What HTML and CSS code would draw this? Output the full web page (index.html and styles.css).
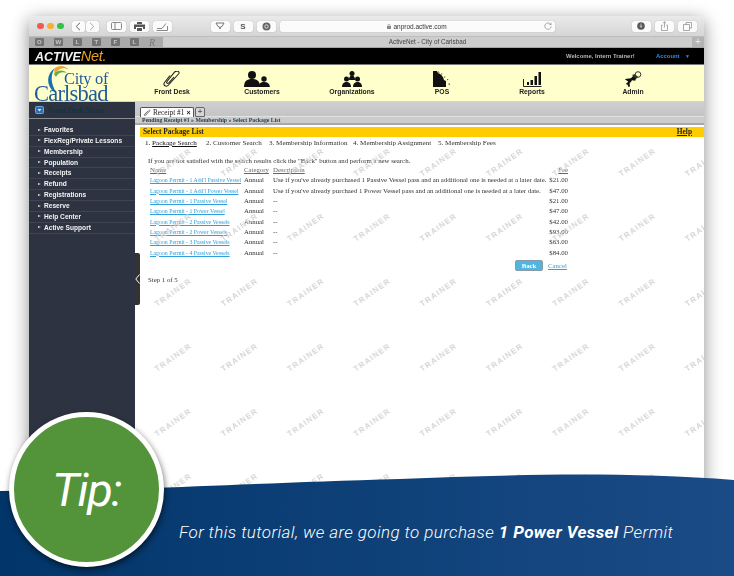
FILE: index.html
```html
<!DOCTYPE html>
<html lang="en">
<head>
    <meta charset="UTF-8">
    <title>ActiveNet - City of Carlsbad</title>
    <link rel="stylesheet" href="styles.css">
</head>
<body>
    <div class="window">
        <!-- browser toolbar -->
        <div class="toolbar">
            <div class="lights"><i class="red"></i><i class="amber"></i><i class="green"></i></div>
            <div class="tb-group nav-pair">
                <span class="tb-btn half"><svg width="6" height="9" viewBox="0 0 6 9"><path d="M5 .8 1.2 4.5 5 8.2" fill="none" stroke="#666" stroke-width="1"/></svg></span>
                <span class="tb-btn half"><svg width="6" height="9" viewBox="0 0 6 9"><path d="M1 .8 4.8 4.5 1 8.2" fill="none" stroke="#aaa" stroke-width="1"/></svg></span>
            </div>
            <span class="tb-btn sidebar-btn"><svg width="11" height="8" viewBox="0 0 11 8"><rect x=".5" y=".5" width="10" height="7" rx="1" fill="none" stroke="#888"/><path d="M4 .5v7" stroke="#888"/></svg></span>
            <span class="tb-btn"><svg width="11" height="9" viewBox="0 0 11 9"><path d="M3 0h5v2H3zM0 2.500h11V7H9V5H2v2H0zM3 6h5v3H3z" fill="#555"/></svg></span>
            <span class="tb-btn"><svg width="12" height="9" viewBox="0 0 12 9"><path d="M.5 8.500h11V4M1 6.500h5l4-5" fill="none" stroke="#888"/></svg></span>
            <span class="tb-btn ext-first"><svg width="10" height="8" viewBox="0 0 10 8"><path d="M1 1h8L7 4.500H6L5 7 4 4.500H3z" fill="none" stroke="#777"/></svg></span>
            <span class="tb-btn ext-text">S</span>
            <span class="tb-btn"><svg width="9" height="9" viewBox="0 0 9 9"><circle cx="4.500" cy="4.500" r="4" fill="#666"/><circle cx="4.500" cy="4.500" r="1.700" fill="none" stroke="#ddd"/></svg></span>
            <div class="urlbar">
                <span class="url"><svg width="4" height="5" viewBox="0 0 4 5"><rect y="2" width="4" height="3" fill="#888"/><path d="M1 2V1a1 1 0 0 1 2 0v1" fill="none" stroke="#888" stroke-width=".6"/></svg>anprod.active.com</span>
                <svg class="reload" width="8" height="8" viewBox="0 0 8 8"><path d="M6.800 2.500A3.200 3.200 0 1 0 7.200 4.500M5.300 2.600h1.800V.8" fill="none" stroke="#888" stroke-width=".7"/></svg>
            </div>
            <span class="tb-btn right-first"><svg width="8" height="8" viewBox="0 0 8 8"><circle cx="4" cy="4" r="3.800" fill="#555"/><path d="M4 1.500v3.200M2.800 3.800 4 5.500l1.200-1.700" stroke="#ddd" fill="none" stroke-width=".8"/></svg></span>
            <span class="tb-btn"><svg width="7" height="10" viewBox="0 0 7 10"><path d="M1.500 4H.5v5.500h6V4h-1M3.500 6.500V.8M2 2.200 3.500.8 5 2.200" fill="none" stroke="#888" stroke-width=".7"/></svg></span>
            <span class="tb-btn"><svg width="9" height="9" viewBox="0 0 9 9"><path d="M3 2.500V.5h5.500V6h-2M.5 2.500h6V8.500h-6z" fill="none" stroke="#888" stroke-width=".7"/></svg></span>
        </div>

        <!-- browser tab strip -->
        <div class="tabstrip">
            <div class="favs">
                <span class="fav">O</span><span class="fav">W</span><span class="fav">L</span><span class="fav">T</span><span class="fav">F</span><span class="fav">L</span><span class="fav-r">R</span>
            </div>
            <div class="page-title">ActiveNet - City of Carlsbad</div>
            <div class="new-tab">+</div>
        </div>

        <!-- app header -->
        <div class="topbar">
            <div class="brand"><span class="brand-active">ACTIVE</span><span class="brand-net">Net.</span></div>
            <div class="welcome">Welcome, Intern Trainer!</div>
            <div class="account">Account</div>
            <div class="account-arrow">▼</div>
        </div>
        <div class="navbar">
            <div class="city-logo">
                <svg class="swoosh" width="26" height="28" viewBox="0 0 26 28">
                    <path d="M9 27C1 20 1 9 10 3 5 10 6 19 11 27z" fill="#1a6fae"/>
                    <path d="M10 3C14 0 20 0 24 5 19 2 14 3 10 9 9 7 9 5 10 3z" fill="#e9a92a"/>
                    <path d="M9 9C12 5 18 4 22 8 17 6 13 8 11 12z" fill="#6aa84f"/>
                </svg>
                <div class="city-of">City of</div>
                <div class="carlsbad">Carlsbad</div>
            </div>
            <div class="nav-item">
                <svg width="24" height="16" viewBox="0 0 24 16"><path d="M10 4.500 4.500 11.500C2.500 14.500 6.500 16.500 8.500 14L18.500 3C20.500 .5 16.500-1 14.500 1.200L7 10.500C6 12 7.500 13 8.800 11.800L14 6" fill="none" stroke="#222" stroke-width="1.100"/></svg>
                <span>Front Desk</span>
            </div>
            <div class="nav-item">
                <svg class="shift-left" width="28" height="16" viewBox="0 0 28 16"><circle cx="9" cy="4" r="4" fill="#111"/><path d="M1 16c0-6 3-8 8-8s8 2 8 8z" fill="#111"/><circle cx="21" cy="8" r="2.700" fill="#111"/><path d="M15.500 16c.3-3.500 2-5 5.500-5s5.500 1.500 6 5z" fill="#111"/></svg>
                <span>Customers</span>
            </div>
            <div class="nav-item">
                <svg width="20" height="16" viewBox="0 0 20 16"><circle cx="10" cy="2.500" r="2.500" fill="#111"/><path d="M7 9c0-3 1-4.500 3-4.500S13 6 13 9z" fill="#111"/><circle cx="4.500" cy="8" r="2.500" fill="#111"/><path d="M0 16c0-3.500 2-5 4.500-5S9 12.500 9 16z" fill="#111"/><circle cx="15.500" cy="8" r="2.500" fill="#111"/><path d="M11 16c0-3.500 2-5 4.500-5s4.500 1.500 4.500 5z" fill="#111"/></svg>
                <span>Organizations</span>
            </div>
            <div class="nav-item">
                <svg width="18" height="16" viewBox="0 0 18 16"><path d="M0 0h4l1 2c3 1 5 3 6 7l2 1v6H0z" fill="#111"/><path d="M5.500 0l1 1.500-1 .5zM8.500 2l1 1-1 1zM11.500 5l1 1-1 1zM14 8l1.500.5-1 1zM15.500 12l1.500 1-1 1.500z" fill="#222"/></svg>
                <span>POS</span>
            </div>
            <div class="nav-item">
                <svg width="19" height="16" viewBox="0 0 19 16"><path d="M.5 8v7.500h18" fill="none" stroke="#222"/><path d="M4 11h2v3H4zM7.500 9h2.500v5H7.500zM11.500 5H14v9h-2.500zM15.500 1H18v13h-2.500z" fill="#111"/></svg>
                <span>Reports</span>
            </div>
            <div class="nav-item nav-last">
                <svg width="17" height="16" viewBox="0 0 17 16"><path d="M0 7h6l4-3 2 2-2 4-3-1-3 3v3H2V13L0 12l3-2z" fill="#111" transform="rotate(-8 8 8)"/><path d="M7 4l3-1 3 3-2 2z" fill="#333"/><circle cx="13" cy="3.500" r="2.800" fill="none" stroke="#333"/></svg>
                <span>Admin</span>
            </div>
        </div>

        <div class="main">
            <div class="sidebar">
                <div class="side-head">
                    <svg width="9" height="8" viewBox="0 0 9 8"><rect x=".5" y=".5" width="8" height="7" rx="1" fill="#2f6ea8" stroke="#6aa9dd"/><path d="M2.500 3h4L4.500 5.500z" fill="#cfe6f8"/></svg>
                    <span>Front Desk Menu</span>
                </div>
                <ul class="side-menu">
                    <li>Favorites</li>
                    <li>FlexReg/Private Lessons</li>
                    <li>Membership</li>
                    <li>Population</li>
                    <li>Receipts</li>
                    <li>Refund</li>
                    <li>Registrations</li>
                    <li>Reserve</li>
                    <li>Help Center</li>
                    <li>Active Support</li>
                </ul>
            </div>
            <div class="handle"><svg width="5" height="10" viewBox="0 0 5 10"><path d="M4.500.5.800 5l3.700 4.500" fill="none" stroke="#fff" stroke-width="1"/></svg></div>

            <div class="content">
                <div class="tabs-row">
                    <div class="receipt-tab">
                        <svg width="8" height="7" viewBox="0 0 7 7"><path d="M1 6 5.500 1.300c.6-.6 1.300.2.800.7L2 6.500C1 7 .3 6 1 5.300L4.500 2" fill="none" stroke="#444" stroke-width=".6"/></svg>
                        <span>Receipt #1</span><b>×</b>
                    </div>
                    <div class="add-tab">+</div>
                </div>
                <div class="crumbs">Pending Receipt #1 » Membership » Select Package List</div>
                <div class="title-bar"><span>Select Package List</span><a class="help">Help</a></div>
                <div class="steps">
                    <span class="step current">1. <u>Package Search</u></span>
                    <span class="step s2">2. Customer Search</span>
                    <span class="step s3">3. Membership Information</span>
                    <span class="step s4">4. Membership Assignment</span>
                    <span class="step s5">5. Membership Fees</span>
                </div>
                <p class="info">If you are not satisfied with the search results click the "Back" button and perform a new search.</p>
                <div class="pkg-table">
                    <div class="th">Name</div><div class="th">Category</div><div class="th">Description</div><div class="th fee">Fee</div>
                    <a class="pkg">Lagoon Permit - 1 Add'l Passive Vessel</a><div>Annual</div><div>Use if you've already purchased 1 Passive Vessel pass and an additional one is needed at a later date.</div><div class="fee">$21.00</div>
                    <a class="pkg">Lagoon Permit - 1 Add'l Power Vessel</a><div>Annual</div><div>Use if you've already purchaed 1 Power Vessel pass and an additional one is needed at a later date.</div><div class="fee">$47.00</div>
                    <a class="pkg">Lagoon Permit - 1 Passive Vessel</a><div>Annual</div><div>--</div><div class="fee">$21.00</div>
                    <a class="pkg">Lagoon Permit - 1 Power Vessel</a><div>Annual</div><div>--</div><div class="fee">$47.00</div>
                    <a class="pkg">Lagoon Permit - 2 Passive Vessels</a><div>Annual</div><div>--</div><div class="fee">$42.00</div>
                    <a class="pkg">Lagoon Permit - 2 Power Vessels</a><div>Annual</div><div>--</div><div class="fee">$93.00</div>
                    <a class="pkg">Lagoon Permit - 3 Passive Vessels</a><div>Annual</div><div>--</div><div class="fee">$63.00</div>
                    <a class="pkg">Lagoon Permit - 4 Passive Vessels</a><div>Annual</div><div>--</div><div class="fee">$84.00</div>
                </div>
                <div class="actions">
                    <button class="back-btn">Back</button>
                    <a class="cancel">Cancel</a>
                </div>
                <div class="step-count">Step 1 of 5</div>

                <!-- TRAINER stamp over the page -->
                <svg class="watermark" width="100%" height="100%">
                    <defs>
                        <pattern id="stamp" width="66.3" height="65" patternUnits="userSpaceOnUse">
                            <text x="38" y="28" text-anchor="middle" transform="rotate(-35 38 25)" class="stamp-text">TRAINER</text>
                        </pattern>
                    </defs>
                    <rect width="100%" height="100%" fill="url(#stamp)"/>
                </svg>
            </div>
        </div>
    </div>

    <!-- tip banner -->
    <div class="tip-banner">
        <svg class="wave" width="734" height="104" viewBox="0 0 734 104">
            <defs>
                <linearGradient id="waveFill" x1="0" x2="1" y1="0" y2="0">
                    <stop offset="0" stop-color="#02366a"/>
                    <stop offset="1" stop-color="#1b4b86"/>
                </linearGradient>
            </defs>
            <path d="M0 19C160 18 250 11 400 7 500 3 620-1 734 8V104H0z" fill="url(#waveFill)"/>
        </svg>
        <p class="tip-text">For this tutorial, we are going to purchase <b>1 Power Vessel</b> Permit</p>
    </div>
    <div class="tip-circle">Tip:</div>
</body>
</html>
```

FILE: styles.css
```css
* {
    margin: 0;
    padding: 0;
    box-sizing: border-box;
}

body {
    position: relative;
    width: 734px;
    height: 576px;
    overflow: hidden;
    background: #fff;
    font-family: "Liberation Serif", serif;
    padding: 16px 30px 0 29px;
}

/* browser window */
.window {
    width: 675px;
    height: 560px;
    display: flex;
    flex-direction: column;
    border-radius: 5px 5px 0 0;
    overflow: hidden;
    box-shadow: 0 4px 18px rgba(0, 0, 0, 0.45);
    filter: blur(0.25px);
}

.toolbar {
    height: 21px;
    flex: none;
    display: flex;
    align-items: center;
    padding-left: 8px;
    gap: 4px;
    background: linear-gradient(#ebeaeb, #d6d5d6);
    border-bottom: 1px solid #bdbdbd;
}

.lights {
    display: flex;
    gap: 3.500px;
    margin-right: 4px;
}

.lights i {
    width: 6.500px;
    height: 6.500px;
    border-radius: 50%;
}

.red { background: #f05a52; }
.amber { background: #f5b12e; }
.green { background: #35c148; }

.tb-btn {
    width: 19px;
    height: 11px;
    display: flex;
    align-items: center;
    justify-content: center;
    background: #fbfbfb;
    border-radius: 2px;
    box-shadow: 0 0 1px rgba(0, 0, 0, 0.35);
}

.tb-btn.half { width: 13px; }

.nav-pair {
    display: flex;
    gap: 1px;
    margin-right: 2px;
}

.sidebar-btn { margin-left: 2px; }
.ext-first { margin-left: 35px; }
.ext-text { font: bold 8px "Liberation Sans", sans-serif; color: #555; }

.urlbar {
    width: 275px;
    height: 11px;
    display: flex;
    align-items: center;
    justify-content: center;
    position: relative;
    background: #fbfbfb;
    border-radius: 2px;
    box-shadow: 0 0 1px rgba(0, 0, 0, 0.3);
}

.url {
    font: 6.500px "Liberation Sans", sans-serif;
    color: #333;
    display: flex;
    align-items: center;
    gap: 2px;
}

.reload {
    position: absolute;
    right: 3px;
    top: 1.500px;
}

.right-first { margin-left: 73px; }

.tabstrip {
    height: 11px;
    flex: none;
    display: flex;
    background: #cdcdcd;
    border-bottom: 1px solid #a5a5a5;
}

.favs {
    width: 134px;
    display: flex;
    align-items: center;
    padding-left: 6px;
    gap: 10.500px;
    background: #aaa;
}

.fav {
    width: 8.500px;
    height: 8px;
    background: #737373;
    border-radius: 1px;
    color: #c8c8c8;
    font: bold 6px/8px "Liberation Sans", sans-serif;
    text-align: center;
}

.fav-r {
    color: #777;
    font: italic 10px/9px "Liberation Serif", serif;
}

.page-title {
    flex: 1;
    text-align: center;
    font: 6.300px/10px "Liberation Sans", sans-serif;
    color: #444;
}

.new-tab {
    width: 12px;
    background: #b3b3b3;
    color: #e8e8e8;
    font: 10px/10px "Liberation Sans", sans-serif;
    text-align: center;
}

/* app header */
.topbar {
    height: 17px;
    flex: none;
    display: flex;
    align-items: center;
    background: #000;
    border-bottom: 1px solid #777;
    font-family: "Liberation Sans", sans-serif;
    color: #b8b8b8;
}

.brand {
    width: 537px;
    padding-left: 6px;
    font-style: italic;
    line-height: 16px;
    white-space: nowrap;
}

.brand-active {
    color: #f3f3f3;
    font-weight: bold;
    font-size: 12.500px;
}

.brand-net {
    color: #e9a020;
    font-size: 14.500px;
    letter-spacing: -0.300px;
}

.welcome {
    width: 90px;
    font-size: 5.900px;
    font-weight: bold;
}

.account {
    width: 29px;
    font-size: 5.900px;
    font-weight: bold;
    color: #2b8cf0;
}

.account-arrow {
    font-size: 5px;
    color: #2b8cf0;
}

.navbar {
    height: 37px;
    flex: none;
    display: flex;
    background: #ffffcc;
    border-bottom: 1px solid #d6d6c0;
    font-family: "Liberation Sans", sans-serif;
}

.city-logo {
    width: 98px;
    position: relative;
    color: #1f5c99;
    font-family: "Liberation Serif", serif;
}

.swoosh {
    position: absolute;
    left: 16px;
    top: 0;
}

.city-of {
    position: absolute;
    left: 35px;
    top: 7px;
    font-size: 16.500px;
    letter-spacing: -0.300px;
    line-height: 14px;
    white-space: nowrap;
}

.carlsbad {
    position: absolute;
    left: 5px;
    top: 21px;
    font-size: 22.500px;
    letter-spacing: -0.800px;
    line-height: 16px;
}

.nav-item {
    width: 90px;
    display: flex;
    flex-direction: column;
    align-items: center;
    padding-top: 6px;
    font-size: 6.800px;
    font-weight: bold;
    color: #222;
    line-height: 8px;
}

.nav-item span { margin-top: 1px; }
.nav-item .shift-left { margin-right: 10px; }
.nav-last { margin-left: 11px; }

/* page body */
.main {
    flex: 1;
    position: relative;
    display: flex;
    min-height: 0;
}

.sidebar {
    width: 106px;
    flex: none;
    background: #2d3340;
}

.side-head {
    height: 17px;
    display: flex;
    align-items: center;
    gap: 4px;
    padding-left: 6px;
    font-size: 7.500px;
    font-weight: bold;
    color: #14363f;
    border-bottom: 1px solid #8a8d93;
}

.side-menu {
    list-style: none;
    margin-top: 5px;
    padding-top: 1px;
    font-family: "Liberation Sans", sans-serif;
}

.side-menu li {
    height: 10.870px;
    line-height: 10px;
    padding-left: 15px;
    position: relative;
    color: #f2f2f2;
    font-size: 6.600px;
    font-weight: bold;
    border-bottom: 1px solid #3e4452;
}

.side-menu li::before {
    content: "";
    position: absolute;
    left: 9px;
    top: 3.500px;
    border-left: 3px solid #ddd;
    border-top: 1.800px solid transparent;
    border-bottom: 1.800px solid transparent;
}

.handle {
    position: absolute;
    left: 106px;
    top: 151px;
    width: 5px;
    height: 52px;
    display: flex;
    align-items: center;
    background: #333;
    border-radius: 0 2px 2px 0;
    z-index: 2;
}

.content {
    flex: 1;
    position: relative;
    padding-left: 5px;
    background: #fff;
    font-size: 6.800px;
    color: #333;
}

.tabs-row {
    height: 15px;
    margin-left: -5px;
    padding: 5px 0 0 5px;
    display: flex;
    gap: 1px;
    background: linear-gradient(#cfcfcf, #c4c4c4);
    border-bottom: 1px solid #e2e2e2;
}

.receipt-tab {
    width: 54px;
    height: 10px;
    display: flex;
    align-items: center;
    gap: 2px;
    padding-left: 2px;
    background: #fff;
    border: 1px solid #555;
    border-bottom: none;
    border-radius: 2px 2px 0 0;
    font-size: 7.300px;
    color: #222;
    white-space: nowrap;
}

.receipt-tab b {
    font: bold 7px "Liberation Sans", sans-serif;
}

.add-tab {
    width: 10px;
    height: 10px;
    background: #d6d6d6;
    border: 1px solid #666;
    border-radius: 2px 2px 0 0;
    color: #666;
    font: bold 8px/8px "Liberation Sans", sans-serif;
    text-align: center;
}

.crumbs {
    height: 8px;
    margin-left: -5px;
    padding-left: 7px;
    background: #ccc;
    border-bottom: 2px solid #a8a8a8;
    font-size: 5.800px;
    font-weight: bold;
    line-height: 6px;
    color: #24424c;
}

.title-bar {
    height: 10px;
    margin-top: 2px;
    display: flex;
    justify-content: space-between;
    padding: 0 12px 0 3px;
    background: #ffcc00;
    font-size: 7.400px;
    font-weight: bold;
    line-height: 10px;
    color: #222;
}

.help { text-decoration: underline; }

.steps {
    position: relative;
    height: 14px;
    font-size: 7.100px;
    line-height: 12px;
    color: #333;
}

.step { position: absolute; top: 0; white-space: nowrap; }
.step.current { left: 5px; color: #111; }
.step.s2 { left: 66px; }
.step.s3 { left: 129px; }
.step.s4 { left: 213px; }
.step.s5 { left: 298px; }

.info {
    margin: 5px 0 0 8px;
    height: 9px;
    line-height: 9px;
}

.pkg-table {
    display: grid;
    grid-template-columns: 94px 29px 273px 22px;
    grid-auto-rows: 10.350px;
    margin-left: 10px;
    line-height: 10px;
    white-space: nowrap;
}

.th {
    color: #666;
    text-decoration: underline;
}

.fee { text-align: right; }

.pkg {
    font-size: 5.800px;
    color: #2f9fdc;
    text-decoration: underline;
}

.actions {
    display: flex;
    align-items: center;
    gap: 5px;
    margin: 2px 0 0 375px;
}

.back-btn {
    width: 28px;
    height: 11px;
    border: 1px solid #8d9aa3;
    border-radius: 2px;
    background: #4db6e4;
    color: #fff;
    font: bold 6.800px "Liberation Serif", serif;
}

.cancel {
    color: #2f9fdc;
    text-decoration: underline;
    font-size: 6.800px;
}

.step-count {
    margin: 4px 0 0 8px;
    line-height: 9px;
}

.watermark {
    position: absolute;
    left: 0;
    top: 35px;
    height: calc(100% - 35px);
    pointer-events: none;
}

.stamp-text {
    font: bold 7.800px "Liberation Sans", sans-serif;
    letter-spacing: 1.200px;
    fill: #d4d4d4;
}

/* tip banner */
.tip-banner {
    position: absolute;
    left: 0;
    bottom: 0;
    width: 734px;
    height: 104px;
}

.wave {
    position: absolute;
    left: 0;
    top: 0;
}

.tip-text {
    position: absolute;
    left: 179px;
    top: 49px;
    font: italic 300 17px/22px Roboto, sans-serif;
    letter-spacing: 0.400px;
    color: #fff;
    white-space: nowrap;
}

.tip-text b { font-weight: 700; }

.tip-circle {
    position: absolute;
    left: 9px;
    top: 412px;
    width: 155px;
    height: 155px;
    display: flex;
    align-items: center;
    justify-content: center;
    background: #53933a;
    border: 5px solid #fff;
    border-radius: 50%;
    box-shadow: 1px 3px 6px rgba(0, 0, 0, 0.55);
    font: italic 400 47px Roboto, sans-serif;
    letter-spacing: -1.500px;
    color: #fff;
}
```
